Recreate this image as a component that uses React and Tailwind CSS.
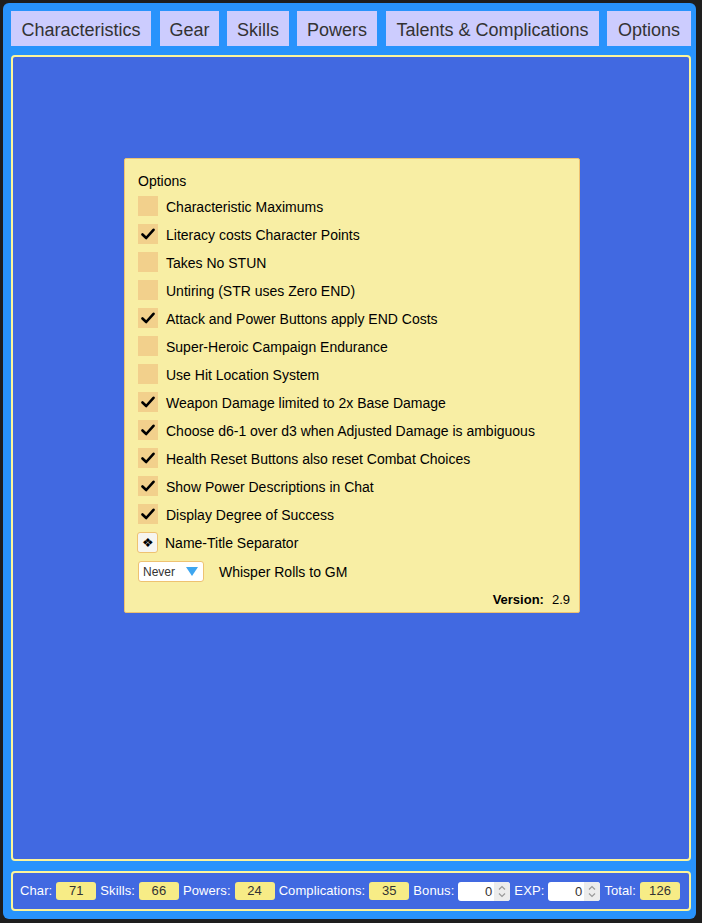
import React from "react";

const tabs = [
  ["Characteristics", "w-[140px]", ""],
  ["Gear", "w-[59px]", "ml-[9px]"],
  ["Skills", "w-[62px]", "ml-[8px]"],
  ["Powers", "w-[80px]", "ml-[8px]"],
  ["Talents & Complications", "w-[213px]", "ml-[9px]"],
  ["Options", "w-[84px]", "ml-[8px]"],
];

const opts = [
  ["Characteristic Maximums", false],
  ["Literacy costs Character Points", true],
  ["Takes No STUN", false],
  ["Untiring (STR uses Zero END)", false],
  ["Attack and Power Buttons apply END Costs", true],
  ["Super-Heroic Campaign Endurance", false],
  ["Use Hit Location System", false],
  ["Weapon Damage limited to 2x Base Damage", true],
  ["Choose d6-1 over d3 when Adjusted Damage is ambiguous", true],
  ["Health Reset Buttons also reset Combat Choices", true],
  ["Show Power Descriptions in Chat", true],
  ["Display Degree of Success", true],
];

function Check() {
  return (
    <svg width="14" height="14" viewBox="0 0 14 14">
      <path d="M1.5 7.5 L5.2 11 L12.5 2.8" fill="none" stroke="#000" strokeWidth="2.6" strokeLinecap="round" strokeLinejoin="round" />
    </svg>
  );
}

function Box({ value }) {
  return (
    <div className="w-[40px] h-[18px] rounded-[3px] bg-[#f7ec86] text-[#333] text-[13px] leading-[18px] text-center">
      {value}
    </div>
  );
}

function Spin() {
  return (
    <div className="w-[52px] h-[19px] rounded-[3px] bg-white flex overflow-hidden">
      <div className="flex-1 text-right pr-[2px] text-[13px] leading-[19px] text-[#333]">0</div>
      <div className="w-[16px] bg-[#ececec] flex items-center justify-center">
        <svg width="10" height="15" viewBox="0 0 10 15">
          <path d="M2 5.5 L5 2.5 L8 5.5" fill="none" stroke="#999" strokeWidth="1.2" />
          <path d="M2 9.5 L5 12.5 L8 9.5" fill="none" stroke="#999" strokeWidth="1.2" />
        </svg>
      </div>
    </div>
  );
}

export default function App() {
  return (
    <div
      className="min-h-[923px] w-[702px] bg-[#1e1e1e] pl-[3px] pr-[6px] pt-[3px] pb-[4px]"
      style={{ fontFamily: '"Liberation Sans", Arial, sans-serif' }}
    >
      <div className="h-[916px] rounded-[6px] bg-[#2893fc] pl-[8px] pr-[5px] pt-[8px] pb-[8px] flex flex-col">
        <div className="flex h-[35px]">
          {tabs.map(([t, w, m]) => (
            <div key={t} className={`${w} ${m} bg-[#ccccfe] flex items-center justify-center pt-[3px] text-[18px] text-[#333] whitespace-nowrap`}>
              {t}
            </div>
          ))}
        </div>
        <div className="mt-[9px] flex-1 border-2 border-[#fcf59a] rounded-[4px] bg-[#4169e1] flex flex-col items-center">
          <div className="mt-[101px] ml-[2px] w-[456px] h-[455px] bg-[#f8eea4] border border-[#eec271] rounded-[2px] pl-[13px] pr-[9px] pt-[11px] flex flex-col text-[14px] text-black">
            <div className="h-[20px] leading-[20px] pt-[1px]">Options</div>
            <div className="mt-[6px] flex flex-col gap-[8px]">
              {opts.map(([label, on]) => (
                <div key={label} className="flex items-center h-[20px]">
                  <div className="w-[20px] h-[20px] bg-[#f2d08c] flex items-center justify-center">
                    {on ? <Check /> : null}
                  </div>
                  <span className="ml-[8px] pt-[2px]">{label}</span>
                </div>
              ))}
            </div>
            <div className="mt-[8px] flex items-center h-[21px]">
              <div className="w-[21px] h-[21px] -ml-[1px] bg-[#f6f5f0] border border-[#eec271] rounded-[3px] flex items-center justify-center text-[13px]">
                ❖
              </div>
              <span className="ml-[7px] pt-[2px]">Name-Title Separator</span>
            </div>
            <div className="mt-[8px] flex items-center h-[21px]">
              <div className="w-[66px] h-[21px] bg-white border border-[#eec271] rounded-[3px] flex items-center justify-between pl-[4px] pr-[5px]">
                <span className="text-[12px] text-[#333] pt-[1px]">Never</span>
                <svg width="12" height="9" viewBox="0 0 12 9">
                  <path d="M0 0 L12 0 L6 9 Z" fill="#3ea6f0" />
                </svg>
              </div>
              <span className="ml-[15px] pt-[2px]">Whisper Rolls to GM</span>
            </div>
            <div className="mt-auto mb-[3px] flex justify-end items-center text-[13px] gap-[8px]">
              <span className="font-bold">Version:</span>
              <span>2.9</span>
            </div>
          </div>
        </div>
        <div className="mt-[10px] h-[40px] border-2 border-[#fcf59a] rounded-[4px] bg-[#4169e1] flex items-center pl-[7px] gap-[4px] text-[13px] tracking-[0.1px] text-white">
          <span>Char:</span>
          <Box value="71" />
          <span>Skills:</span>
          <Box value="66" />
          <span>Powers:</span>
          <Box value="24" />
          <span>Complications:</span>
          <Box value="35" />
          <span>Bonus:</span>
          <Spin />
          <span>EXP:</span>
          <Spin />
          <span>Total:</span>
          <Box value="126" />
        </div>
      </div>
    </div>
  );
}
